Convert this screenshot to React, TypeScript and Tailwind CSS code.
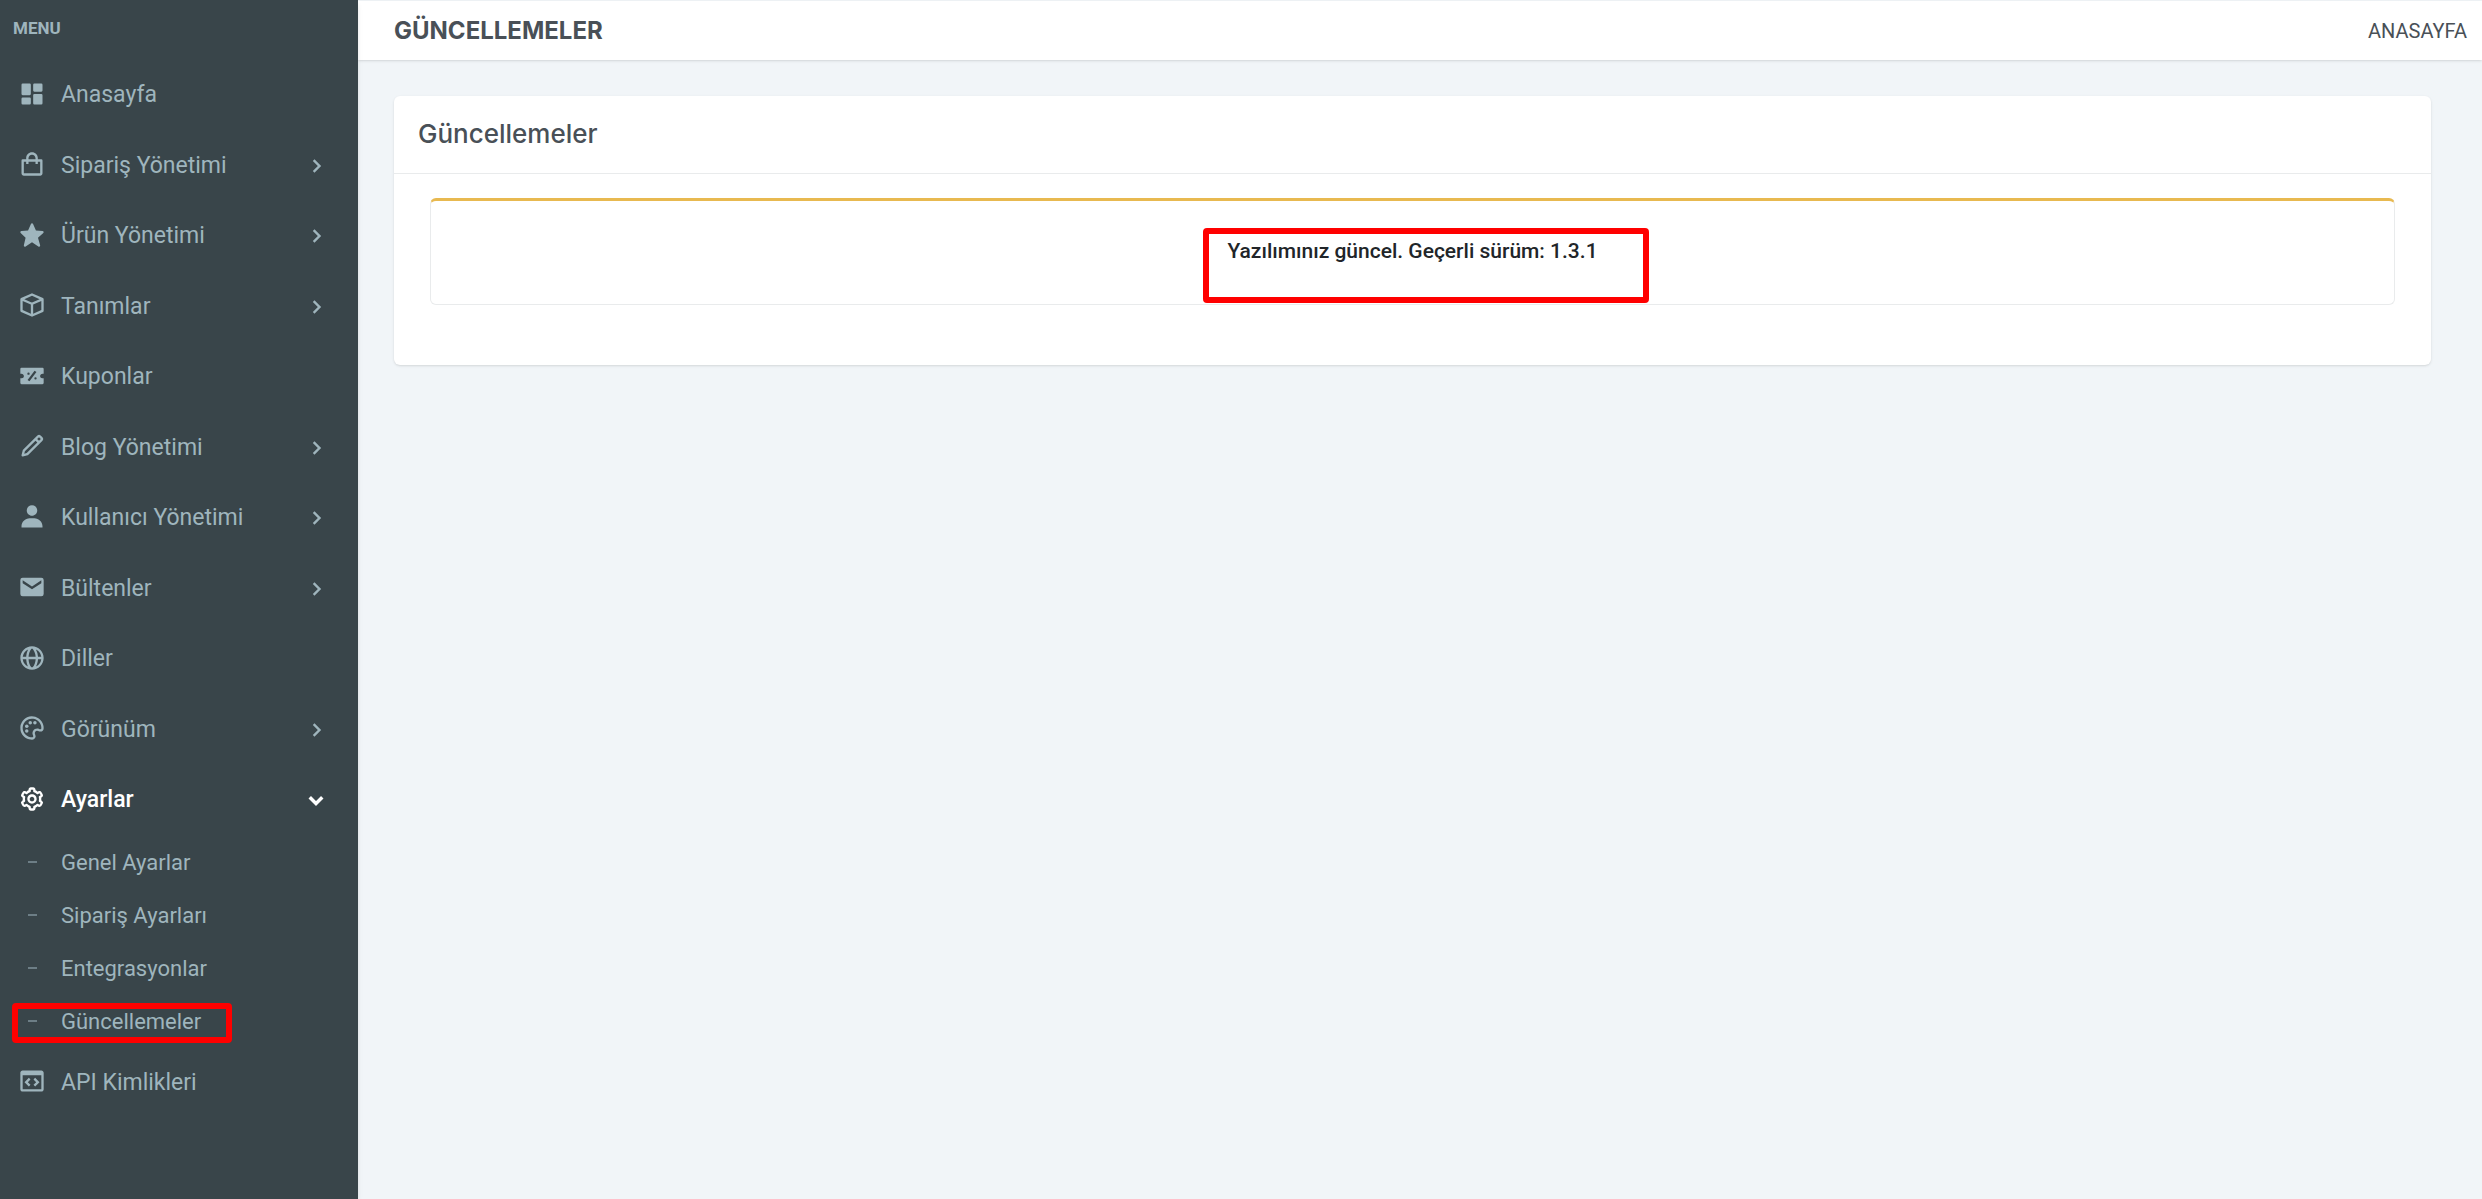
import { useState } from 'react';
import type { IconType } from 'react-icons';
import {
  BiChevronDown,
  BiChevronRight,
  BiCodeBlock,
  BiCog,
  BiCube,
  BiGlobe,
  BiPalette,
  BiPencil,
  BiShoppingBag,
  BiSolidDashboard,
  BiSolidDiscount,
  BiSolidEnvelope,
  BiSolidStar,
  BiSolidUser,
} from 'react-icons/bi';
import clsx from 'clsx';

type MenuItem = {
  label: string;
  icon: IconType;
  expandable?: boolean;
  children?: string[];
};

const menuItems: MenuItem[] = [
  { label: 'Anasayfa', icon: BiSolidDashboard },
  { label: 'Sipariş Yönetimi', icon: BiShoppingBag, expandable: true },
  { label: 'Ürün Yönetimi', icon: BiSolidStar, expandable: true },
  { label: 'Tanımlar', icon: BiCube, expandable: true },
  { label: 'Kuponlar', icon: BiSolidDiscount },
  { label: 'Blog Yönetimi', icon: BiPencil, expandable: true },
  { label: 'Kullanıcı Yönetimi', icon: BiSolidUser, expandable: true },
  { label: 'Bültenler', icon: BiSolidEnvelope, expandable: true },
  { label: 'Diller', icon: BiGlobe },
  { label: 'Görünüm', icon: BiPalette, expandable: true },
  {
    label: 'Ayarlar',
    icon: BiCog,
    expandable: true,
    children: ['Genel Ayarlar', 'Sipariş Ayarları', 'Entegrasyonlar', 'Güncellemeler'],
  },
  { label: 'API Kimlikleri', icon: BiCodeBlock },
];

const rowClass = 'flex w-full items-center py-[18px] pr-7 pl-[18px] text-left text-[23px] leading-normal';

type SidebarItemProps = {
  item: MenuItem;
  open: boolean;
  onToggle: () => void;
};

const SidebarItem = ({ item, open, onToggle }: SidebarItemProps) => {
  const Icon = item.icon;
  const content = (
    <>
      <Icon className="mb-[3px] size-7 shrink-0" />
      <span className="ml-[15px] flex-1">{item.label}</span>
    </>
  );

  if (!item.expandable) {
    return (
      <li>
        <a href="#" className={rowClass}>
          {content}
        </a>
      </li>
    );
  }

  return (
    <li>
      <button
        type="button"
        aria-expanded={open}
        onClick={onToggle}
        className={clsx(rowClass, open && 'font-medium text-white')}
      >
        {content}
        {open ? <BiChevronDown className="size-7 stroke-1" /> : <BiChevronRight className="size-7" />}
      </button>
      {open && item.children && (
        <ul>
          {item.children.map((child) => (
            <li key={child} className="relative">
              <a href="#" className="flex h-[53px] items-center pl-7 text-[22px]">
                <span className="h-0.5 w-[9px] bg-[#6d7e86]" />
                <span className="ml-6">{child}</span>
              </a>
              {child === 'Güncellemeler' && (
                <span className="pointer-events-none absolute top-2 left-3 h-10 w-[220px] rounded-sm border-6 border-[#ff0000]" />
              )}
            </li>
          ))}
        </ul>
      )}
    </li>
  );
};

const Sidebar = () => {
  const [openItem, setOpenItem] = useState('Ayarlar');

  return (
    <aside className="z-10 w-[358px] shrink-0 bg-[#39454a] text-[#9fb5bd] shadow-md">
      <p className="pt-[18px] pb-[22px] pl-[13px] text-[17px] leading-5 font-bold">MENU</p>
      <nav>
        <ul>
          {menuItems.map((item) => (
            <SidebarItem
              key={item.label}
              item={item}
              open={openItem === item.label}
              onToggle={() => setOpenItem(openItem === item.label ? '' : item.label)}
            />
          ))}
        </ul>
      </nav>
    </aside>
  );
};

export default function App() {
  return (
    <div className="flex min-h-screen bg-[#f1f5f8] font-[Roboto,sans-serif] text-[#495057]">
      <Sidebar />
      <div className="min-w-0 flex-1 pt-px">
        <header className="flex h-[59px] items-center justify-between bg-white pr-[15px] pl-9 shadow">
          <h1 className="font-[Inter,sans-serif] text-2xl font-bold">GÜNCELLEMELER</h1>
          <a href="#" className="text-xl">
            ANASAYFA
          </a>
        </header>
        <main className="pt-9 pr-[51px] pl-9">
          <section className="rounded-md bg-white shadow-sm">
            <h2 className="border-b border-[#e9ebec] pt-[23px] pb-[25px] pl-6 font-[Inter,sans-serif] text-[26px] leading-[29px] font-medium">
              Güncellemeler
            </h2>
            <div className="px-9 pt-6 pb-[60px]">
              <div className="relative h-[107px] rounded-md border border-t-3 border-[#e9ebec] border-t-[#e8b950] pt-[35px] text-center">
                <p className="text-[21px] leading-[30px] font-medium text-[#212529]">
                  Yazılımınız güncel. Geçerli sürüm: 1.3.1
                </p>
                <span className="pointer-events-none absolute top-[27px] left-1/2 -ml-[210px] h-[75px] w-[446px] rounded-sm border-6 border-[#ff0000]" />
              </div>
            </div>
          </section>
        </main>
      </div>
    </div>
  );
}
